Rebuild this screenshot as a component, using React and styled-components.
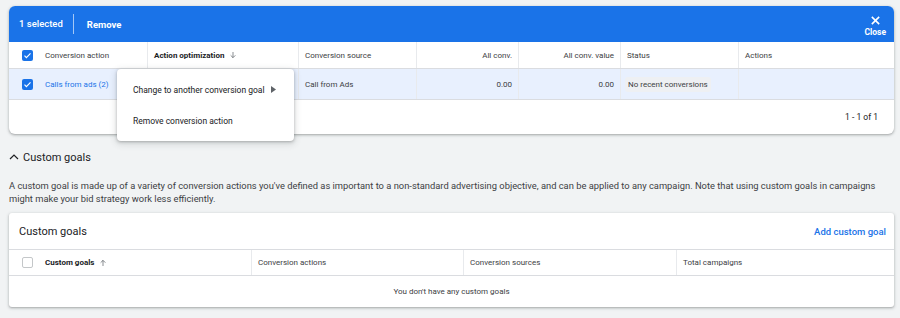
import React from "react";
import styled, { createGlobalStyle } from "styled-components";

const Global = createGlobalStyle`
  html, body { margin: 0; padding: 0; background: #f1f3f4; }
  body { font-family: Roboto, "Liberation Sans", Arial, sans-serif; color: #3c4043; }
  * { box-sizing: border-box; }
`;

const Page = styled.div`
  width: 900px;
  height: 318px;
  padding: 6px 6px 0 9px;
  overflow: hidden;
`;

const Card = styled.div`
  position: relative;
  background: #fff;
  border-radius: 6px;
  box-shadow: 0 1px 2px rgba(60, 64, 67, 0.3), 0 1px 3px 1px rgba(60, 64, 67, 0.12);
`;

const SelectionBar = styled.div`
  height: 36px;
  background: #1a73e8;
  border-radius: 6px 6px 0 0;
  display: flex;
  align-items: center;
  padding: 0 8px 0 10px;
  color: #fff;
  font-size: 9.5px;
`;

const Selected = styled.span`
  font-weight: 500;
  padding-right: 10px;
  border-right: 1px solid rgba(255, 255, 255, 0.6);
  line-height: 20px;
`;

const BarButton = styled.span`
  font-weight: 700;
  margin-left: 13px;
`;

const CloseBtn = styled.div`
  margin-left: auto;
  display: flex;
  flex-direction: column;
  align-items: center;
  font-size: 8.5px;
  font-weight: 700;
  gap: 1px;
  padding-top: 4px;
`;

const Row = styled.div`
  display: grid;
  grid-template-columns: ${(p) => p.$cols};
  height: ${(p) => p.$h}px;
  background: ${(p) => (p.$selected ? "#e8f0fe" : "#fff")};
  border-bottom: 1px solid #dadce0;
`;

const Cell = styled.div`
  display: flex;
  align-items: center;
  justify-content: ${(p) => (p.$right ? "flex-end" : "flex-start")};
  gap: 5px;
  padding: 0 6px 0 ${(p) => p.$pl ?? 6}px;
  border-left: ${(p) => (p.$first ? "none" : "1px solid #e8eaed")};
  font-size: 8px;
  font-weight: ${(p) => (p.$bold ? 700 : 400)};
  color: ${(p) => (p.$link ? "#1a73e8" : p.$bold ? "#202124" : "#3c4043")};
  white-space: nowrap;
`;

const Check = styled.span`
  width: 11px;
  height: 11px;
  border-radius: 2px;
  display: inline-flex;
  align-items: center;
  justify-content: center;
  background: ${(p) => (p.$on ? "#1a73e8" : "#fff")};
  border: ${(p) => (p.$on ? "none" : "1.5px solid #c4c7c9")};
  margin-right: 7px;
  flex: none;
`;

const Chip = styled.span`
  background: #eef0f3;
  border-radius: 3px;
  padding: 3px 3px;
`;

const Footer = styled.div`
  height: 34px;
  display: flex;
  align-items: center;
  justify-content: flex-end;
  padding-right: 16px;
  font-size: 8.5px;
  color: #202124;
`;

const Menu = styled.div`
  position: absolute;
  left: 108px;
  top: 63px;
  width: 177px;
  height: 72px;
  background: #fff;
  border-radius: 4px;
  box-shadow: 0 1px 3px rgba(60, 64, 67, 0.35), 0 2px 6px 2px rgba(60, 64, 67, 0.12);
  padding-top: 5px;
  z-index: 2;
`;

const MenuItem = styled.div`
  height: 31px;
  display: flex;
  align-items: center;
  padding-left: 16px;
  font-size: 8.5px;
  color: #202124;
  gap: 6px;
`;

const SectionHeading = styled.div`
  display: flex;
  align-items: center;
  gap: 3px;
  margin: 15px 0 0 -1px;
  height: 16px;
  font-size: 11px;
  color: #202124;
`;

const Para = styled.p`
  margin: 14px 0 0 0;
  font-size: 9.35px;
  line-height: 13px;
  color: #3c4043;
  width: 880px;
`;

const Card2 = styled(Card)`
  margin-top: 8px;
  border-radius: 3px;
`;

const TitleRow = styled.div`
  height: 37px;
  display: flex;
  align-items: center;
  justify-content: space-between;
  padding: 0 8px 0 10px;
  border-bottom: 1px solid #dadce0;
`;

const Title = styled.span`
  font-size: 11px;
  color: #202124;
`;

const LinkText = styled.span`
  font-size: 9.5px;
  color: #1a73e8;
  font-weight: 500;
`;

const Empty = styled.div`
  height: 31px;
  display: flex;
  align-items: center;
  justify-content: center;
  font-size: 8px;
  color: #3c4043;
`;

const CheckMark = () => (
  <svg width="9" height="9" viewBox="0 0 24 24">
    <path d="M4 12.5l5 5L20 6.5" fill="none" stroke="#fff" strokeWidth="3.2" />
  </svg>
);

const Arrow = ({ up }) => (
  <svg width="8" height="8" viewBox="0 0 24 24" style={{ transform: up ? "rotate(180deg)" : "none" }}>
    <path d="M12 3v17M5 13l7 7 7-7" fill="none" stroke="#5f6368" strokeWidth="2.2" />
  </svg>
);

const cols1 = "138px 151px 118px 102px 102px 118px 156px";
const cols2 = "242px 212px 213px 218px";

export default function App() {
  return (
    <Page>
      <Global />
      <Card>
        <SelectionBar>
          <Selected>1 selected</Selected>
          <BarButton>Remove</BarButton>
          <CloseBtn>
            <svg width="11" height="11" viewBox="0 0 24 24">
              <path d="M4 4l16 16M20 4L4 20" stroke="#fff" strokeWidth="3.4" fill="none" />
            </svg>
            <span>Close</span>
          </CloseBtn>
        </SelectionBar>
        <Row $cols={cols1} $h={27}>
          <Cell $first $pl={13}>
            <Check $on>
              <CheckMark />
            </Check>
            Conversion action
          </Cell>
          <Cell $bold>
            Action optimization <Arrow />
          </Cell>
          <Cell>Conversion source</Cell>
          <Cell $right>All conv.</Cell>
          <Cell $right>All conv. value</Cell>
          <Cell>Status</Cell>
          <Cell>Actions</Cell>
        </Row>
        <Row $cols={cols1} $h={31} $selected>
          <Cell $first $pl={13} $link>
            <Check $on>
              <CheckMark />
            </Check>
            Calls from ads (2)
          </Cell>
          <Cell />
          <Cell>Call from Ads</Cell>
          <Cell $right>0.00</Cell>
          <Cell $right>0.00</Cell>
          <Cell $pl={4}>
            <Chip>No recent conversions</Chip>
          </Cell>
          <Cell />
        </Row>
        <Footer>1 - 1 of 1</Footer>
        <Menu>
          <MenuItem>
            Change to another conversion goal
            <svg width="5" height="7" viewBox="0 0 5 7">
              <path d="M0 0L5 3.5L0 7z" fill="#5f6368" />
            </svg>
          </MenuItem>
          <MenuItem>Remove conversion action</MenuItem>
        </Menu>
      </Card>

      <SectionHeading>
        <svg width="12" height="12" viewBox="0 0 24 24">
          <path d="M4 16l8-8 8 8" fill="none" stroke="#202124" strokeWidth="2.4" />
        </svg>
        Custom goals
      </SectionHeading>
      <Para>
        A custom goal is made up of a variety of conversion actions you've defined as important to a
        non-standard advertising objective, and can be applied to any campaign. Note that using custom
        goals in campaigns might make your bid strategy work less efficiently.
      </Para>

      <Card2>
        <TitleRow>
          <Title>Custom goals</Title>
          <LinkText>Add custom goal</LinkText>
        </TitleRow>
        <Row $cols={cols2} $h={26}>
          <Cell $first $pl={13} $bold>
            <Check />
            Custom goals <Arrow up />
          </Cell>
          <Cell>Conversion actions</Cell>
          <Cell>Conversion sources</Cell>
          <Cell>Total campaigns</Cell>
        </Row>
        <Empty>You don't have any custom goals</Empty>
      </Card2>
    </Page>
  );
}
